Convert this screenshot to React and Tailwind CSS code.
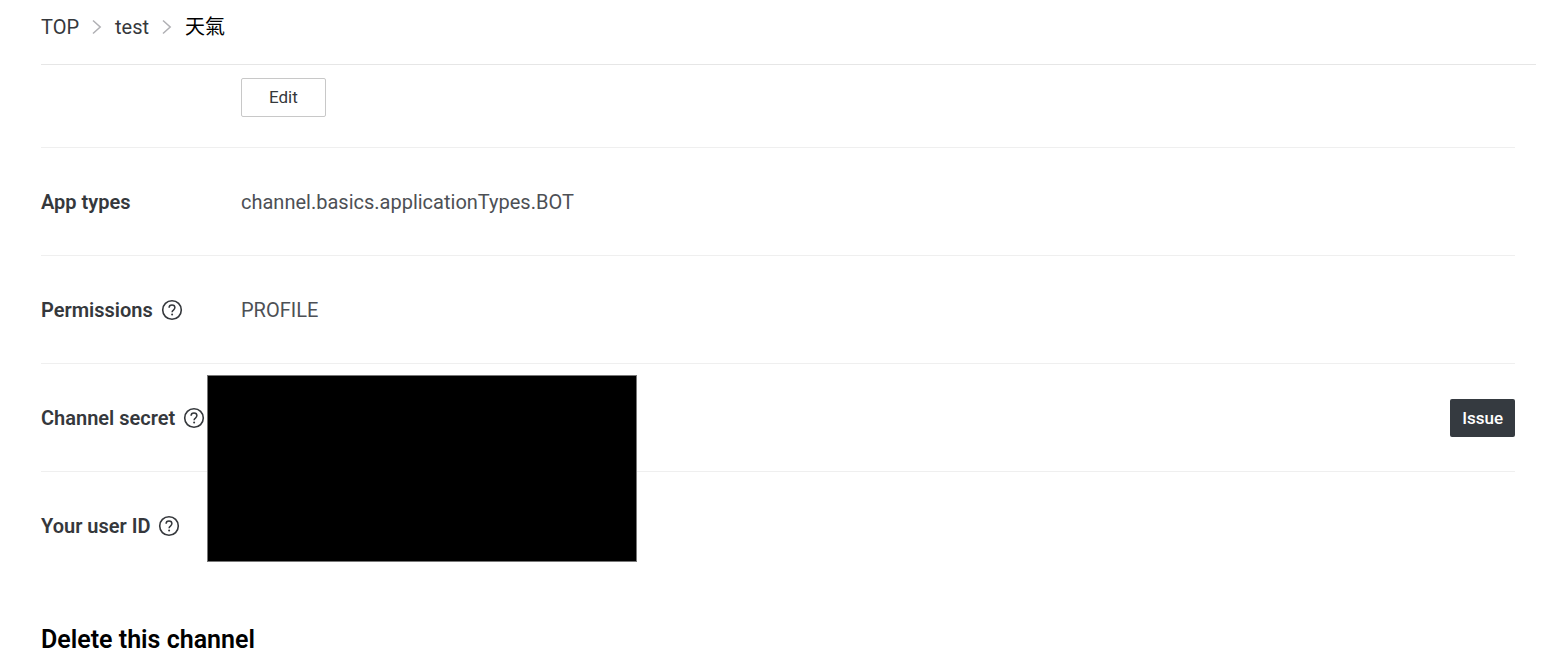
const HelpIcon = () => (
  <svg className="h-[22px] w-[22px]" viewBox="0 0 22 22" fill="none" stroke="currentColor" aria-hidden="true">
    <circle cx="11" cy="11" r="9.3" strokeWidth="1.6" />
    <path d="M8.1 8.7C8.1 7 9.4 6 11 6s2.9 1 2.9 2.6c0 1.2-.7 1.8-1.5 2.5-.8.6-1.3 1.1-1.3 2.2" strokeWidth="1.5" />
    <circle cx="11.1" cy="15.4" r="1" fill="currentColor" stroke="none" />
  </svg>
);

const Separator = () => (
  <svg className="h-4 w-[10px] text-[#b0b0b4]" viewBox="0 0 10 16" fill="none" stroke="currentColor" strokeWidth="1.5" aria-hidden="true">
    <path d="M1 1.5L8.2 8L1 14.5" />
  </svg>
);

const Row = ({ label, help, last, children }) => {
  return (
    <div className={`flex min-h-27 items-center ${last ? "" : "border-b border-[#efefef]"}`}>
      <dt className="flex w-50 shrink-0 items-center gap-2 font-semibold text-[#35383c]">
        {label}
        {help && (
          <button type="button" aria-label={`About ${label}`}>
            <HelpIcon />
          </button>
        )}
      </dt>
      <dd className="flex flex-1 items-center text-[#4d5055]">{children}</dd>
    </div>
  );
};

const App = () => {
  return (
    <div className="bg-white pr-5 pl-[41px] font-['Roboto','Noto_Sans_CJK_TC',sans-serif] text-xl text-[#35383c]">
      <nav className="border-b border-[#e6e6e6] pt-[13px] pb-[23px]" aria-label="Breadcrumb">
        <ol className="flex h-7 items-center">
          <li><a href="#top">TOP</a></li>
          <li className="mx-[13px]"><Separator /></li>
          <li><a href="#test">test</a></li>
          <li className="mx-[13px]"><Separator /></li>
          <li className="text-black">天氣</li>
        </ol>
      </nav>

      <main className="mr-[21px]">
        <div className="border-b border-[#efefef] pt-[13px] pb-[30px] pl-50">
          <button type="button" className="block rounded-xs border border-[#c8c8c8] px-[27px] py-[6px] text-[17px] leading-[25px]">
            Edit
          </button>
        </div>

        <dl>
          <Row label="App types">channel.basics.applicationTypes.BOT</Row>
          <Row label="Permissions" help>PROFILE</Row>
          <div className="relative">
            <Row label="Channel secret" help>
              <button type="button" className="ml-auto rounded-xs bg-[#353a40] px-3 py-[5px] text-[17px] leading-7 font-medium text-white">
                Issue
              </button>
            </Row>
            <Row label="Your user ID" help last />
            {/* hides the secret and the user id */}
            <div className="absolute top-[11px] left-[166px] h-[187px] w-[430px] border border-[#777777] bg-black"></div>
          </div>
        </dl>

        <h2 className="pt-11 pb-4 text-[25px] leading-8 font-semibold text-black">Delete this channel</h2>
      </main>
    </div>
  );
};

export default App;
